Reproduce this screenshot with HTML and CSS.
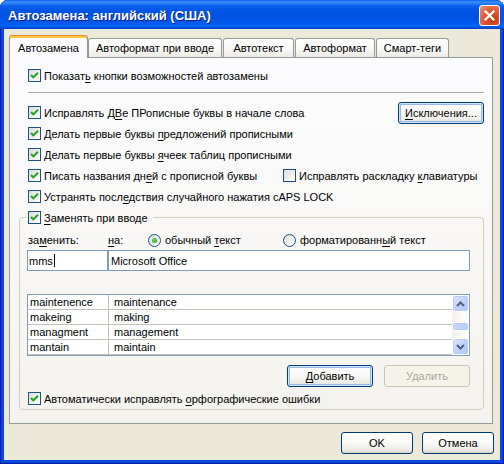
FILE: index.html
```html
<!DOCTYPE html>
<html lang="ru">
<head>
<meta charset="utf-8">
<title>Автозамена</title>
<link rel="stylesheet" href="styles.css">
</head>
<body>
<div class="window">
  <div class="titlebar">
    <span class="title">Автозамена: английский (США)</span>
    <span class="close"><svg width="13" height="13" viewBox="0 0 13 13"><path d="M2.5 2.5 L10.5 10.5 M10.5 2.5 L2.5 10.5" stroke="#fff" stroke-width="2.2" stroke-linecap="square" fill="none"/></svg></span>
  </div>
  <div class="client">
    <div class="tabs">
      <div class="tab active t1">Автозамена</div>
      <div class="tab t2">Автоформат при вводе</div>
      <div class="tab t3">Автотекст</div>
      <div class="tab t4">Автоформат</div>
      <div class="tab t5">Смарт-теги</div>
    </div>
    <div class="panel">
      <div class="row"><span class="cb on"><svg viewBox="0 0 11 11"><path d="M2 5 L4.3 7.4 L9 2.7"/></svg></span><span>Показат<u>ь</u> кнопки возможностей автозамены</span></div>
      <div class="sep"></div>
      <div class="row"><span class="cb on"><svg viewBox="0 0 11 11"><path d="M2 5 L4.3 7.4 L9 2.7"/></svg></span><span>Исправлять Д<u>В</u>е ПРописные буквы в начале слова</span><button class="btn focus exc"><span><u>И</u>сключения...</span></button></div>
      <div class="row"><span class="cb on"><svg viewBox="0 0 11 11"><path d="M2 5 L4.3 7.4 L9 2.7"/></svg></span><span>Делать первые буквы <u>п</u>редложений прописными</span></div>
      <div class="row"><span class="cb on"><svg viewBox="0 0 11 11"><path d="M2 5 L4.3 7.4 L9 2.7"/></svg></span><span>Делать первые буквы <u>я</u>чеек таблиц прописными</span></div>
      <div class="row">
        <span class="half"><span class="cb on"><svg viewBox="0 0 11 11"><path d="M2 5 L4.3 7.4 L9 2.7"/></svg></span><span>Писать названия дн<u>е</u>й с прописной буквы</span></span>
        <span class="cb"></span><span>Исправлять раскладку <u>к</u>лавиатуры</span>
      </div>
      <div class="row"><span class="cb on"><svg viewBox="0 0 11 11"><path d="M2 5 L4.3 7.4 L9 2.7"/></svg></span><span>Устранять посл<u>е</u>дствия случайного нажатия cAPS LOCK</span></div>
      <fieldset class="group">
        <legend class="legend"><span class="lg"><span class="cb on"><svg viewBox="0 0 11 11"><path d="M2 5 L4.3 7.4 L9 2.7"/></svg></span><span><u>З</u>аменять при вводе</span></span></legend>
        <div class="labels">
          <span class="lbl1">за<u>м</u>енить:</span>
          <span class="lbl2"><u>н</u>а:</span>
          <span class="opt1"><span class="rb on"><span class="dot"></span></span><span>обычный <u>т</u>екст</span></span>
          <span class="opt2"><span class="rb"></span><span>форматированн<u>ы</u>й текст</span></span>
        </div>
        <div class="inputs">
          <div class="inp i1"><span>mms</span><span class="caret"></span></div>
          <div class="inp i2"><span>Microsoft Office</span></div>
        </div>
        <div class="list">
          <div class="rows">
            <div class="lrow"><span class="c1">maintenence</span><span class="c2">maintenance</span></div>
            <div class="lrow"><span class="c1">makeing</span><span class="c2">making</span></div>
            <div class="lrow"><span class="c1">managment</span><span class="c2">management</span></div>
            <div class="lrow"><span class="c1">mantain</span><span class="c2">maintain</span></div>
          </div>
          <div class="sb">
            <span class="sbtn"><svg width="9" height="6" viewBox="0 0 9 6"><path d="M1 5 L4.5 1.5 L8 5" stroke="#4D6185" stroke-width="2" fill="none"/></svg></span>
            <span class="track"><span class="thumb"></span></span>
            <span class="sbtn"><svg width="9" height="6" viewBox="0 0 9 6"><path d="M1 1 L4.5 4.5 L8 1" stroke="#4D6185" stroke-width="2" fill="none"/></svg></span>
          </div>
        </div>
        <div class="actions">
          <button class="btn focus add"><span><u>Д</u>обавить</span></button>
          <button class="btn disabled del"><span>Удалить</span></button>
        </div>
        <div class="row last"><span class="cb on"><svg viewBox="0 0 11 11"><path d="M2 5 L4.3 7.4 L9 2.7"/></svg></span><span>Автоматически исправлять <u>о</u>рфографические ошибки</span></div>
      </fieldset>
    </div>
    <div class="footer">
      <button class="btn fbtn">OK</button>
      <button class="btn fbtn">Отмена</button>
    </div>
  </div>
</div>
</body>
</html>
```

FILE: styles.css
```css
* { box-sizing: border-box; }
html, body { margin: 0; padding: 0; }
body {
  width: 504px; height: 464px; overflow: hidden; background: #fff;
  font-family: "Liberation Sans", Arial, sans-serif;
  font-size: 11px; color: #000;
}
u { text-decoration-thickness: 1px; text-underline-offset: 2px; }

.window {
  width: 504px; height: 464px;
  display: flex; flex-direction: column;
  background: #0A48DC;
  border-radius: 8px 8px 0 0;
  overflow: hidden;
  box-shadow: inset 1px 0 #0019B8, inset -1px 0 #001DA0, inset 0 -1px #001DA0;
}
.titlebar {
  flex: none; height: 29px;
  display: flex; align-items: center; justify-content: space-between;
  padding: 0 4px 0 8px;
  background: linear-gradient(to bottom, #0A5FEA 0%, #3D8FF4 7%, #2A7DF2 12%, #0A60EC 20%, #0055E5 35%, #0054E3 60%, #0059EC 78%, #0064F6 88%, #0052DC 95%, #003FC0 100%);
}
.title {
  color: #fff; font-weight: bold; font-size: 13px;
  text-shadow: 1px 1px #0A1A8A;
  margin-top: 1px;
}
.close {
  width: 21px; height: 21px; margin-top: 2px;
  border: 1px solid #fff; border-radius: 3px;
  background: radial-gradient(circle at 70% 75%, #C93A16 0%, #DC5430 45%, #E8825F 85%, #F2A98E 100%);
  display: flex; align-items: center; justify-content: center;
}
.client {
  flex: 1; margin: 0 4px 4px;
  background: #ECE9D8;
  display: flex; flex-direction: column;
  padding: 6px 7px 6px 5px;
}
.tabs { flex: none; height: 22px; display: flex; align-items: flex-end; position: relative; z-index: 1; }
.tab {
  height: 19px; margin-right: 1px;
  border: 1px solid #919B9C; border-bottom: none; border-radius: 3px 3px 0 0;
  background: linear-gradient(to bottom, #FFFFFF, #F7F7F4 60%, #ECEBE5);
  display: flex; align-items: center; justify-content: center;
  white-space: nowrap;
}
.tab.active {
  height: 23px; margin-bottom: -1px; margin-right: 0;
  border-top: 1px solid #E68B2C;
  box-shadow: inset 0 2px #FFC73C;
  background: #FCFCFE;
  padding-top: 1px;
}
.t1 { width: 79px; }
.t2 { width: 134px; }
.t3 { width: 71px; }
.t4 { width: 80px; }
.t5 { width: 73px; }

.panel {
  flex: none; height: 367px;
  border: 1px solid #919B9C;
  background: linear-gradient(to bottom, #FCFCFE, #F4F3EE);
  padding: 7px 8px 0 9px;
  display: flex; flex-direction: column;
}
.row {
  height: 21px; margin-left: 9px; flex: none;
  display: flex; align-items: center; white-space: nowrap;
}
.half { display: flex; align-items: center; width: 255px; }
.cb {
  width: 13px; height: 13px; flex: none; margin-right: 3px;
  border: 1px solid #1C5180;
  background: linear-gradient(135deg, #DCDCD7, #FFFFFF);
  display: flex;
}
.cb svg { width: 11px; height: 11px; }
.cb path { fill: none; stroke: #21A121; stroke-width: 2; }
.sep {
  flex: none; margin: 6px 0 8px 9px; height: 2px;
  border-top: 1px solid #ACA899; border-bottom: 1px solid #FFFFFF;
}
.btn {
  font-family: inherit; font-size: 11px; color: #000;
  height: 22px; padding: 0;
  border: 1px solid #003C74; border-radius: 3px;
  background: linear-gradient(to bottom, #FFFFFF, #F8F8F5 50%, #ECEBE6 85%, #D6D0C5);
  display: flex; align-items: center; justify-content: center;
}
.btn.focus { box-shadow: inset 0 0 0 1px #CEE7FF, inset 0 0 0 2px #98B8EA; }
.btn.disabled {
  color: #ACA899; border-color: #C9C7BA;
  background: #F5F4EA;
}
.exc { width: 86px; margin-left: auto; flex: none; }

.group {
  margin: 0; padding: 0 13px 0 6px;
  border: 1px solid #D0D0BF; border-radius: 4px;
  min-width: 0;
}
.legend { padding: 0 5px 0 2px; }
.lg { display: flex; align-items: center; height: 21px; white-space: nowrap; }
.labels {
  margin: 2px 0 0 2px; height: 20px;
  display: flex; align-items: center; white-space: nowrap;
}
.lbl1 { width: 80px; }
.lbl2 { width: 40px; }
.opt1 { width: 135px; display: flex; align-items: center; }
.opt2 { display: flex; align-items: center; }
.rb {
  width: 13px; height: 13px; flex: none; margin-right: 4px;
  border: 1px solid #1C5180; border-radius: 50%;
  background: linear-gradient(135deg, #DCDCD7, #FFFFFF);
  display: flex; align-items: center; justify-content: center;
}
.dot { width: 5px; height: 5px; border-radius: 50%; background: radial-gradient(circle at 35% 35%, #64D464, #21A121); }
.inputs { display: flex; height: 21px; margin-left: 1px; }
.inp {
  height: 21px; border: 1px solid #7F9DB9; background: #fff;
  display: flex; align-items: center; white-space: nowrap;
}
.i1 { width: 81px; padding-left: 1px; }
.i2 { width: 362px; padding-left: 2px; }
.caret { display: inline-block; width: 1px; height: 13px; background: #000; margin-left: 1px; }
.list {
  margin: 23px 0 0 1px; height: 62px;
  border: 1px solid #7F9DB9; background: #fff;
  display: flex;
}
.rows { flex: 1; }
.lrow {
  height: 15px; display: grid; grid-template-columns: 81px 1fr;
  border-bottom: 1px solid #C5C2B8;
}
.c1 { border-right: 1px solid #C5C2B8; padding-left: 2px; line-height: 14px; }
.c2 { padding-left: 5px; line-height: 14px; }
.sb { width: 17px; flex: none; display: flex; flex-direction: column; background: #FEFEFB; }
.sbtn {
  height: 17px; flex: none;
  border: 1px solid #FFFFFF; border-radius: 3px;
  background: linear-gradient(135deg, #DDE7FE, #C1D3FB 50%, #AFC6F8);
  box-shadow: inset 0 0 0 1px #B9CCF8;
  display: flex; align-items: center; justify-content: center;
}
.track { flex: 1; background: linear-gradient(to right, #F3F1EC, #FEFEFB); padding-top: 10px; }
.thumb {
  display: block; height: 9px;
  border: 1px solid #FFFFFF; border-radius: 3px;
  background: linear-gradient(to right, #C9D8FC, #B9CDFB);
  box-shadow: inset 0 0 0 1px #B5C8F5;
}
.actions {
  margin-top: 9px; height: 22px;
  display: flex; justify-content: flex-end; gap: 11px;
}
.add, .del { width: 86px; }
.row.last { margin: 1px 0 0 2px; }

.footer {
  flex: none; margin: 8px -1px 0 0; height: 22px;
  display: flex; justify-content: flex-end; gap: 9px;
}
.fbtn { width: 72px; }
```
